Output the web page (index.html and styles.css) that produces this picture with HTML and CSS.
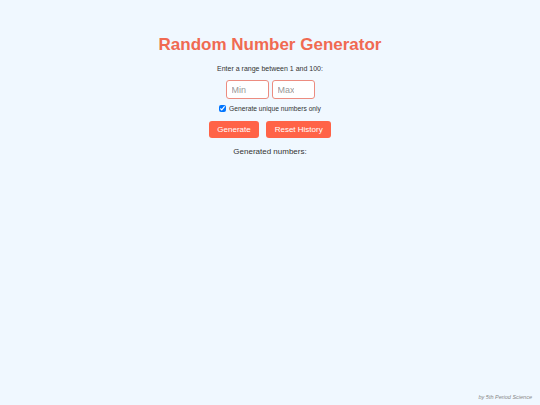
FILE: index.html
```html
<!DOCTYPE html>
<html lang="en">
<head>
    <meta charset="UTF-8">
    <meta name="viewport" content="width=device-width, initial-scale=1.0">
    <title>Random Number Generator</title>
    <link rel="stylesheet" href="styles.css">
</head>
<body>
    <div class="container">
        <h1>Random Number Generator</h1>
        <p class="prompt">Enter a range between 1 and 100:</p>
        <div class="inputs">
            <input type="number" id="min" placeholder="Min">
            <input type="number" id="max" placeholder="Max">
        </div>
        <label class="unique"><input type="checkbox" id="unique" checked> Generate unique numbers only</label>
        <div class="buttons">
            <button id="generate">Generate</button>
            <button id="reset">Reset History</button>
        </div>
        <h3>Generated numbers:</h3>
        <div id="results"></div>
    </div>
    <div class="footer">by 5th Period Science</div>
</body>
</html>
```

FILE: styles.css
```css
body {
    font-family: "Liberation Sans", Arial, sans-serif;
    background-color: #f0f8ff;
    margin: 0;
    padding: 0;
    height: 405px;
    position: relative;
}
.container {
    text-align: center;
    padding-top: 35px;
}
h1 {
    color: #f06a52;
    font-size: 17px;
    line-height: 20px;
    margin: 0 0 10px 0;
}
.prompt {
    font-size: 7px;
    line-height: 8px;
    color: #333;
    margin: 0 0 7px 0;
}
.inputs {
    display: flex;
    justify-content: center;
    gap: 3px;
    margin-bottom: 5px;
}
.inputs input {
    width: 43px;
    height: 19px;
    box-sizing: border-box;
    border: 1px solid #ec8c80;
    border-radius: 3px;
    padding: 0 5px;
    font-size: 9px;
    font-family: inherit;
    background: #fff;
}
.inputs input::placeholder {
    color: #999;
}
.unique {
    display: flex;
    justify-content: center;
    align-items: center;
    gap: 3px;
    height: 8px;
    font-size: 6.7px;
    color: #333;
}
.unique input {
    width: 7px;
    height: 7px;
    margin: 0;
}
.buttons {
    display: flex;
    justify-content: center;
    gap: 7px;
    margin-top: 9px;
}
.buttons button {
    background-color: #ff6347;
    color: #fff;
    border: none;
    border-radius: 3px;
    height: 17px;
    padding: 0 8.5px;
    font-size: 8px;
    font-family: inherit;
}
h3 {
    font-size: 8px;
    line-height: 9px;
    font-weight: normal;
    color: #333;
    margin: 9px 0 0 0;
}
.footer {
    position: absolute;
    right: 8px;
    bottom: 5px;
    font-size: 5.5px;
    font-style: italic;
    color: #888;
}
```
